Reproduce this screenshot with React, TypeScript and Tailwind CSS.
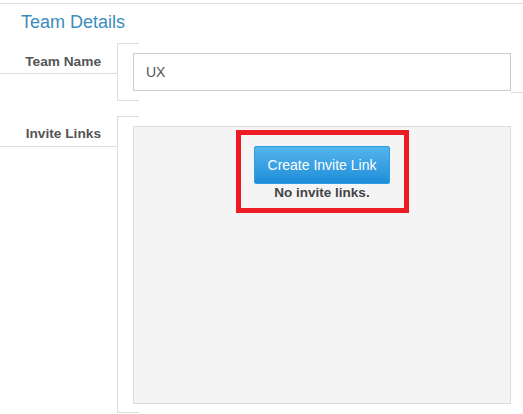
export default function App() {
  const LINE = "bg-[#dddddd]";

  return (
    <div className="min-h-screen bg-white font-['Liberation_Sans',Arial,sans-serif] text-[#555]">
      <div className="h-[3px]" />
      <div className={`h-px ${LINE}`} />
      <h2 className="pl-[21px] pt-[6px] text-[18px] leading-[24px] text-[#3c8dbc]">
        Team Details
      </h2>

      {/* Team Name row */}
      <div className="mt-[9px] flex">
        <div className="w-[117px] shrink-0">
          <div className="border-b border-[#dddddd] pb-[3px] pr-[16px] pt-[11px] text-right text-[13.7px] font-bold leading-[16px] text-[#555]">
            Team Name
          </div>
        </div>
        <div className="flex flex-1 flex-col border-l border-[#dddddd]">
          <div className={`h-px w-[21px] ${LINE}`} />
          <div className="flex">
            <div className="flex-1 pb-[9px] pl-[15px] pt-[9px]">
              <input
                readOnly
                value="UX"
                className="h-[38px] w-full border border-[#cccccc] bg-white px-[12px] text-[14px] text-[#555] outline-none"
              />
            </div>
            <div className="h-[49px] w-[12px] border-b border-[#dddddd]" />
          </div>
          <div className={`h-px w-[21px] ${LINE}`} />
        </div>
      </div>

      {/* Invite Links row */}
      <div className="mt-[15px] flex">
        <div className="w-[117px] shrink-0">
          <div className="border-b border-[#dddddd] pb-[4px] pr-[16px] pt-[10px] text-right text-[13.7px] font-bold leading-[16px] text-[#555]">
            Invite Links
          </div>
        </div>
        <div className="flex flex-1 flex-col border-l border-[#dddddd]">
          <div className={`h-px w-[21px] ${LINE}`} />
          <div className="pb-[8px] pl-[15px] pr-[12px] pt-[9px]">
            <div className="flex h-[278px] flex-col items-center border border-[#dddddd] bg-[#f4f4f4] pt-[3px]">
              <div className="flex w-[173px] flex-col items-center border-[5px] border-[#ed1c24] pb-[7px] pt-[11px]">
                <button className="h-[38px] w-[136px] rounded-[2px] border border-[#2b9ce0] bg-gradient-to-b from-[#54b5ed] to-[#1b8ed9] text-[14px] text-white">
                  Create Invite Link
                </button>
                <div className="mt-[1px] text-[13.5px] font-bold leading-[16px] text-[#444]">
                  No invite links.
                </div>
              </div>
            </div>
          </div>
          <div className={`h-px w-[21px] ${LINE}`} />
        </div>
      </div>
    </div>
  );
}
